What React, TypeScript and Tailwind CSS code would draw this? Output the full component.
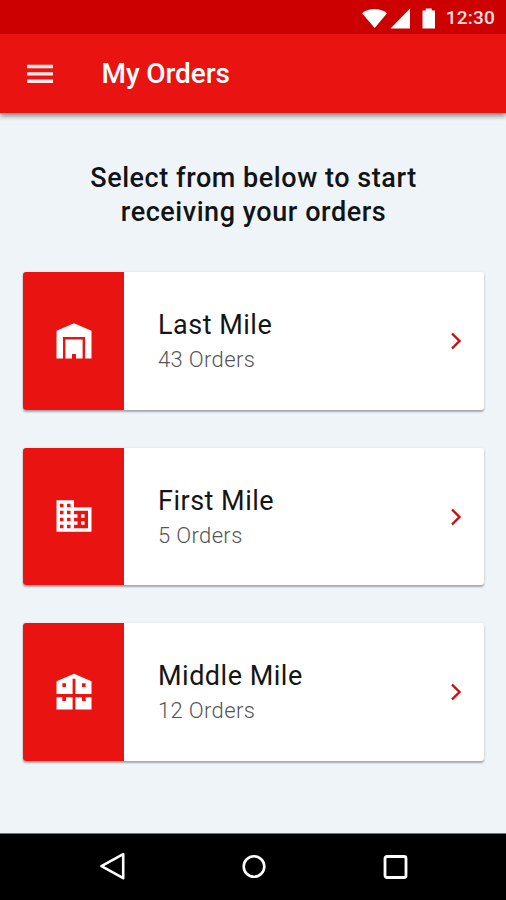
import type { ReactNode } from "react";

const icon = "block h-[42px] w-[42px] fill-white";

function LastMileIcon() {
  return (
    <svg viewBox="0 0 42 42" className={icon}>
      <path d="M3.5 10.8 21 3.2l17.5 7.6v27.6h-6.4V17H10v21.4H3.5z" />
      <path d="M12.4 19.4h17.2v19h-6.6v-4.5h-4v4.5h-6.6z" />
    </svg>
  );
}

function FirstMileIcon() {
  return (
    <svg viewBox="0 0 24 24" className={icon}>
      <path d="M12 7V3H2v18h20V7H12zM6 19H4v-2h2v2zm0-4H4v-2h2v2zm0-4H4V9h2v2zm0-4H4V5h2v2zm4 12H8v-2h2v2zm0-4H8v-2h2v2zm0-4H8V9h2v2zm0-4H8V5h2v2zm10 12h-8v-2h2v-2h-2v-2h2v-2h-2V9h8v10zm-2-8h-2v2h2v-2zm0 4h-2v2h2v-2z" />
    </svg>
  );
}

function MiddleMileIcon() {
  return (
    <svg viewBox="0 0 42 42" className={icon}>
      <path
        fillRule="evenodd"
        d="M3.5 10.3 21 2.8l17.5 7.5v12.8H22.4V7.8h-2.8v15.3H3.5zM9.4 12.3v3.6H13v-3.6zM29 12.3v3.6h3.6v-3.6z"
      />
      <path d="M3.5 26.2h5.8V30H13v-3.8h6.6v12.2H3.5zM22.4 26.2H29V30h3.7v-3.8h5.8v12.2H22.4z" />
    </svg>
  );
}

function OrderCard({ title, count, children }: { title: string; count: string; children: ReactNode }) {
  return (
    <button className="flex h-[137.5px] w-full overflow-hidden rounded-[3px] bg-white text-left shadow-[0_2px_2px_rgba(0,0,0,0.3),0_0_3px_rgba(0,0,0,0.08)]">
      <span className="flex h-full w-[101px] items-center justify-center bg-[#e91411]">{children}</span>
      <span className="flex flex-1 flex-col pt-[36px] pl-[34px]">
        <span className="text-[27px] leading-[34px] tracking-[0.5px] text-[#151515]">{title}</span>
        <span className="text-[22px] leading-[36px] font-light tracking-[0.35px] text-[#555]">{count}</span>
      </span>
      <svg viewBox="0 0 12 18" className="mt-[60px] mr-[22px] h-[18px] w-3 fill-none stroke-[#d5090c] stroke-[2.4]">
        <path d="m2 1.5 7.5 7.5L2 16.5" />
      </svg>
    </button>
  );
}

export default function App() {
  return (
    <div className="flex h-[900px] w-[506px] flex-col overflow-hidden bg-[#eff4f8] font-[Roboto,sans-serif]">
      <div className="flex h-[34px] shrink-0 items-center justify-end bg-[#cd0000] pt-px pr-[11px]">
        <svg viewBox="0 0 76 22" className="mr-[8px] h-[22px] w-[76px] fill-white">
          <path d="M0 6.2C7.5.7 17.5.7 25 6.2L12.7 21z" />
          <path d="M48 1.5V21.5H28.5z" />
          <path d="M60.5 3.4h3.2V1.5h6.1v1.9h3.2v18.1H60.5z" />
        </svg>
        <span className="text-[19px] leading-[22px] font-medium tracking-[0.2px] text-[#fde0e0]">12:30</span>
      </div>
      <header className="z-10 flex h-[79px] shrink-0 items-center bg-[#e91411] pl-[27px] shadow-[0_3px_5px_rgba(0,0,0,0.45)]">
        <svg viewBox="0 0 26 20" className="h-5 w-[26px] fill-[#ffe9e8]">
          <path d="M0 .8h26v3.4H0zM0 8.2h26v3.4H0zM0 15.6h26V19H0z" />
        </svg>
        <h1 className="pt-px pl-[48.5px] text-[28px] leading-[34px] font-medium tracking-[-0.1px] text-white">My Orders</h1>
      </header>
      <main className="flex flex-1 flex-col pt-[48px] pr-[22px] pl-[23px]">
        <h2 className="text-center text-[27px] leading-[34px] font-medium tracking-[0.55px] text-[#111416]">
          Select from below to start
          <br />
          receiving your orders
        </h2>
        <div className="flex flex-col gap-[38px] pt-[43px]">
          <OrderCard title="Last Mile" count="43 Orders">
            <LastMileIcon />
          </OrderCard>
          <OrderCard title="First Mile" count="5 Orders">
            <FirstMileIcon />
          </OrderCard>
          <OrderCard title="Middle Mile" count="12 Orders">
            <MiddleMileIcon />
          </OrderCard>
        </div>
      </main>
      <nav className="flex h-[67px] shrink-0 items-center justify-between border-t border-[#777] bg-black pr-[97px] pl-[98px]">
        <svg viewBox="0 0 28 28" className="h-7 w-7 fill-none stroke-white stroke-[2.6]">
          <path d="M3.5 13.2 25.2 1.2v24z" strokeLinejoin="round" />
        </svg>
        <svg viewBox="0 0 28 28" className="h-7 w-7 fill-none stroke-white stroke-[2.6]">
          <circle cx="14" cy="13.5" r="10.3" />
        </svg>
        <svg viewBox="0 0 28 28" className="h-7 w-7 fill-none stroke-white stroke-[2.8]">
          <rect x="4" y="3.5" width="21" height="21" rx="2" />
        </svg>
      </nav>
    </div>
  );
}
